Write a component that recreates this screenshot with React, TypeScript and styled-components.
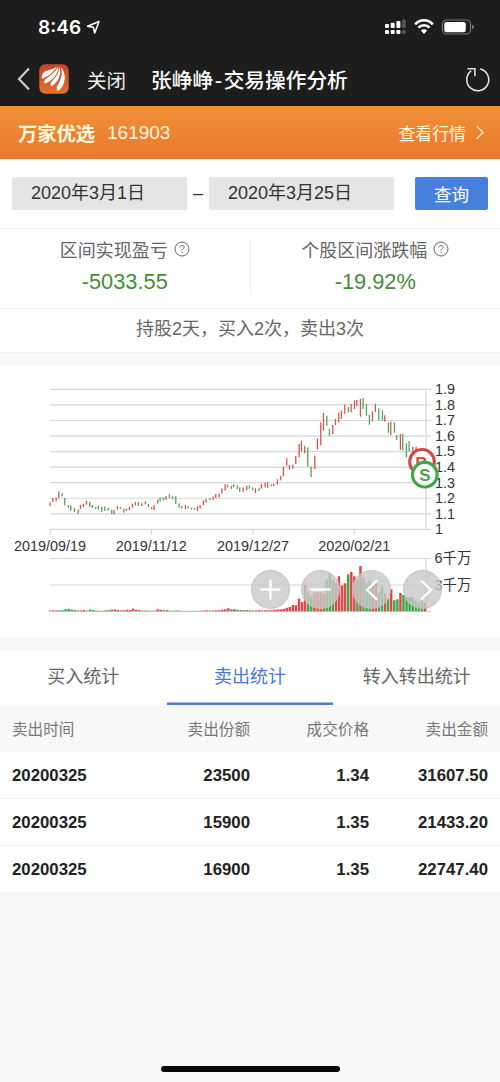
import React from 'react';
import styled, { createGlobalStyle } from 'styled-components';

const Global = createGlobalStyle`
  * { box-sizing: border-box; }
  body { margin: 0; background: #f8f8f8; }
  button { font: inherit; border: 0; padding: 0; margin: 0; }
`;

const Page = styled.div`
  width: 500px;
  height: 1082px;
  display: flex;
  flex-direction: column;
  background: #f8f8f8;
  font-family: "Liberation Sans", "Noto Sans CJK SC", sans-serif;
  color: #666;
  overflow: hidden;
  white-space: nowrap;
`;

const StatusBar = styled.div`
  height: 54px;
  flex: none;
  background: #1d1d1d;
  color: #fff;
  display: flex;
  justify-content: space-between;
  align-items: center;
  padding: 0 26px 0 38px;
`;

const Clock = styled.div`
  display: flex;
  align-items: center;
  gap: 5px;
  font: 600 19px Inter, sans-serif;
`;

const NavBar = styled.header`
  height: 52px;
  flex: none;
  display: flex;
  align-items: center;
  background: #1d1d1d;
  color: #fff;
  padding: 0 10px 1px 17px;
  border-bottom: 1px solid #101820;
`;

const Logo = styled.svg`
  margin-left: 8px;
`;

const CloseText = styled.span`
  font-size: 19.5px;
  margin-left: 18px;
  width: 64px;
  color: #eee;
`;

const Title = styled.h1`
  margin: 0;
  flex: 1;
  font: 500 20.7px "Noto Sans CJK SC", sans-serif;
  span { padding: 0 1.6px; }
`;

const FundBar = styled.section`
  height: 53px;
  flex: none;
  display: flex;
  align-items: center;
  padding: 0 15px 0 18px;
  background: linear-gradient(#ee9136, #ec782e);
  color: #fff8e0;
`;

const FundName = styled.strong`
  font-size: 19.3px;
  font-weight: 700;
  width: 89px;
`;

const FundCode = styled.span`
  font-size: 19px;
  flex: 1;
`;

const QuoteLink = styled.span`
  display: flex;
  align-items: center;
  gap: 9px;
  font-size: 16.9px;
`;

const FilterRow = styled.section`
  height: 70px;
  flex: none;
  display: flex;
  align-items: center;
  padding: 0 12px;
  background: #fff;
  color: #333;
  border-bottom: 1px solid #f2f2f2;
`;

const DateBox = styled.div<{ $w: number }>`
  width: ${p => p.$w}px;
  height: 33px;
  line-height: 33px;
  border-radius: 2px;
  background: #e5e5e5;
  padding-left: 19px;
  font-size: 18px;
`;

const Dash = styled.span`
  width: 22px;
  text-align: center;
  font-size: 18px;
`;

const QueryButton = styled.button`
  margin-left: auto;
  width: 73px;
  height: 33px;
  border-radius: 2px;
  background: #477fdd;
  color: #fff;
  font-size: 17.6px;
`;

const Stats = styled.section`
  height: 80px;
  flex: none;
  display: flex;
  background: #fff;
  border-bottom: 1px solid #f2f2f2;
`;

const Stat = styled.div`
  flex: 1;
  display: flex;
  flex-direction: column;
  align-items: center;
  padding-top: 7px;
`;

const StatDivider = styled.div`
  width: 1px;
  margin: 11px 0 13px;
  background: #f2f2f2;
`;

const StatLabel = styled.div`
  display: flex;
  align-items: center;
  gap: 6px;
  height: 26px;
  font-size: 18px;
`;

const StatValue = styled.div`
  font-size: 21.8px;
  line-height: 40px;
  color: #438e38;
`;

const Summary = styled.section`
  height: 44px;
  flex: none;
  line-height: 41px;
  text-align: center;
  font-size: 18px;
  background: #fff;
  border-bottom: 1px solid #f0f0f0;
`;

const ChartPanel = styled.section`
  position: relative;
  height: 272px;
  flex: none;
  margin: 12px 0 14px;
  background: #fff;
`;

const Chart = styled.svg`
  display: block;
  font-family: "Liberation Sans", "Noto Sans CJK SC", sans-serif;
  font-size: 14.4px;
`;

const ChartControls = styled.div`
  position: absolute;
  left: 250.5px;
  top: 204.5px;
  display: flex;
  gap: 11.8px;
`;

const ControlButton = styled.button`
  width: 39px;
  height: 39px;
  border-radius: 50%;
  background: rgba(200, 200, 200, 0.8);
  border: 1px solid rgba(190, 190, 190, 0.6);
  svg { display: block; }
`;

const Tabs = styled.nav`
  height: 54px;
  flex: none;
  display: flex;
  background: #fff;
`;

const Tab = styled.div<{ $active?: boolean }>`
  flex: 1;
  text-align: center;
  font-size: 18px;
  line-height: 53px;
  color: ${p => (p.$active ? '#4878d0' : '#666')};
  box-shadow: ${p => (p.$active ? 'inset 0 -2.5px #4c78c8' : 'none')};
`;

const Row = styled.div<{ $head?: boolean }>`
  height: ${p => (p.$head ? 47 : 47)}px;
  flex: none;
  display: grid;
  grid-template-columns: 119px 119px 119px 119px;
  align-items: center;
  padding: ${p => (p.$head ? '0 12px 1px' : '1px 12px 0')};
  text-align: right;
  background: ${p => (p.$head ? '#f8f8f8' : '#fff')};
  border-bottom: 1px solid ${p => (p.$head ? '#f8f8f8' : '#f3f3f3')};
  color: ${p => (p.$head ? '#777' : '#222')};
  font-weight: ${p => (p.$head ? 400 : 700)};
  font-size: ${p => (p.$head ? 15.6 : 16.8)}px;
  span:first-child { text-align: left; }
`;

const Footer = styled.footer`
  flex: 1;
  display: flex;
  align-items: flex-end;
  justify-content: center;
  padding-bottom: 10px;
`;

const HomeIndicator = styled.div`
  width: 179px;
  height: 6px;
  border-radius: 3px;
  background: #050505;
`;

const UP = '#d9534f';
const DOWN = '#4fa650';

// Daily ranges as "x,high,low,direction" in thirds of a pixel, measured from y = 370 of the page.
const CANDLES = `150,397,408,r 158,384,396,r 168,383,394,r 176,364,385,r 186,369,379,g 194,384,406,g 205,405,413,g
212,406,423,g 223,414,426,g 234,418,431,r 241,405,417,r 250,401,411,r 259,392,404,r 269,396,411,g 277,405,414,g
287,411,417,g 295,406,419,g 305,410,426,g 314,410,423,g 324,413,422,g 335,419,432,g 342,420,433,r 352,408,419,r
361,411,417,g 371,416,428,g 379,416,423,r 388,411,420,r 397,401,413,r 406,396,406,r 415,396,408,g 425,400,408,r
436,394,403,r 445,402,411,g 455,411,418,r 462,406,420,r 473,389,401,r 480,382,395,g 490,382,391,g 498,378,390,r
508,372,385,g 517,379,388,g 527,379,402,g 537,400,413,g 545,408,415,g 556,405,417,r 564,409,415,r 574,413,419,g
583,414,419,g 592,409,423,r 600,404,416,r 610,391,405,r 618,387,398,r 629,384,391,g 639,379,390,r 647,372,384,r
657,371,382,r 665,355,370,r 675,342,362,r 683,344,352,r 694,347,357,g 701,343,352,r 712,346,358,g 719,352,366,g
729,352,366,r 740,347,361,r 748,346,356,g 758,352,361,g 766,355,369,r 777,355,363,g 784,341,356,r 795,338,352,r
803,337,353,r 814,343,349,g 821,341,348,r 832,328,344,r 842,318,331,r 850,290,319,r 860,265,287,r 868,285,299,r
878,284,296,r 887,258,282,r 897,222,262,r 904,212,244,r 914,228,250,r 923,232,290,g 933,290,321,g 944,257,297,r
952,205,239,r 962,157,226,r 970,129,182,r 980,137,167,g 988,176,197,g 998,165,192,r 1006,147,165,r 1016,128,158,r
1024,122,146,r 1034,104,131,r 1045,111,127,g 1053,102,127,r 1063,91,117,r 1070,90,109,r 1081,86,140,r 1089,84,117,g
1099,102,137,g 1108,135,164,g 1117,125,154,r 1126,102,126,r 1136,115,151,g 1147,121,152,g 1154,136,155,r
1165,157,188,g 1172,155,196,r 1183,157,188,g 1190,195,210,g 1201,192,240,r 1208,192,242,g 1219,220,262,g
1227,213,245,g 1238,230,250,r 1248,230,250,r`
  .split(/\s+/)
  .map(s => s.split(','));

// Volume heights in pixels, one per trading day, with direction.
const VOLUMES = `.8r .9r .8r 1g 1g 2.1g 2.5g 1.7g 1.3g .8g .9r 1.2r .7r 1.8g 1.3g .7g .5g .5g .9r 1.1g 1.8g 1.9r 1.4r 1g 1r
1.6r 1.3r 2.7r 1.5r 1.3g .7r .7r .7g .5g .6r 1.9r 1.6r 1.1g 1.1r .7g .5g .8g .6g .4g .3r .3r .3g .3g .4g .5r .7r .9r .7g
.7r 1r 1r 1.5r 2r 3r 2g 2r 1.5g 1.2g 1r 1.2r 1g .8g .8r 1.2r .8g 1r 1r 1.1r 1.7r 1.8r 2r 2.5r 3.5r 4.3r 6.3r 6r 12.7r
9.3r 27r 20g 16g 19r 19r 19r 18r 32g 38g 31g 28r 35r 26r 28r 37g 39.3r 35r 32g 45.3r 34g 28g 31g 28r 28r 19g 25g 18r
13g 22r 11g 12g 18.3r 16.3g 14.3g 14.3g 14.3g 11g 9.3g 11g 8.3r`
  .split(/\s+/);

const Y_LABELS = ['1.9', '1.8', '1.7', '1.6', '1.5', '1.4', '1.3', '1.2', '1.1', '1'];
const DATES: [string, number][] = [
  ['2019/09/19', 50],
  ['2019/11/12', 151.3],
  ['2019/12/27', 253],
  ['2020/02/21', 354.3],
];

const PriceChart = () => (
  <Chart width="500" height="272" viewBox="0 365 500 272">
    <g stroke="#d6d6d6" strokeWidth="1.2" fill="none">
      {Y_LABELS.map((l, i) => (
        <path key={l} d={`M50 ${389.4 + i * 15.55}H431`} />
      ))}
      <path d="M426 389V529.5M426 558.5V611.5M50 558.5H431M50 585H431M50 611.3H431" />
      {DATES.map(([d, x]) => (
        <path key={d} d={`M${x} 529V535`} />
      ))}
    </g>
    {CANDLES.map(([x, a, b, c]) => (
      <rect
        key={x}
        x={+x / 3 - 0.55}
        y={370 + +a / 3}
        width="1.3"
        height={(+b - +a) / 3}
        fill={c === 'r' ? UP : DOWN}
      />
    ))}
    {VOLUMES.map((v, i) => {
      const h = parseFloat(v);
      const x = 425 - (VOLUMES.length - 1 - i) * 3.072;
      return (
        <rect
          key={i}
          x={x - 1.25}
          y={611.3 - h}
          width="2.5"
          height={h}
          fill={v.endsWith('r') ? '#e0484a' : '#43a648'}
        />
      );
    })}
    <g fill="#333">
      {Y_LABELS.map((l, i) => (
        <text key={l} x="435" y={394.2 + i * 15.55}>{l}</text>
      ))}
      {DATES.map(([d, x]) => (
        <text key={d} x={x} y="550.8" textAnchor="middle">{d}</text>
      ))}
      <text x="434.5" y="563.3">6千万</text>
      <text x="434.5" y="589.6">3千万</text>
    </g>
    <g fontWeight="700" fontSize="17" textAnchor="middle">
      <circle cx="422" cy="461.8" r="12.3" fill="#fff" stroke="#dd4446" strokeWidth="3.2" />
      <text x="421.5" y="468.5" fill="#dd4446">B</text>
      <circle cx="424.8" cy="474.7" r="12.3" fill="#fff" stroke="#46a548" strokeWidth="3.2" />
      <text x="424.8" y="480.7" fill="#46a548">S</text>
    </g>
  </Chart>
);

const CONTROLS = [
  'M9.5 19.5H29.5M19.5 9.5V29.5',
  'M9.5 19.5H29.5',
  'M25 10.5L15 20L25 29.5',
  'M18 10.5L28 20L18 29.5',
];

const HelpIcon = () => (
  <svg width="16" height="16" viewBox="0 0 16 16" fill="none" stroke="#666" strokeWidth="1">
    <circle cx="8" cy="8" r="7" />
    <path d="M6 6.4C6 3.8 10.1 3.8 10.1 6.3C10.1 7.7 8 7.8 8 9.6M8 10.8V12" />
  </svg>
);

const SALES = [
  ['20200325', '23500', '1.34', '31607.50'],
  ['20200325', '15900', '1.35', '21433.20'],
  ['20200325', '16900', '1.35', '22747.40'],
];

export default function App() {
  return (
    <Page>
      <Global />
      <StatusBar>
        <Clock>
          8:46
          <svg width="15" height="15" viewBox="0 0 15 15" fill="none" stroke="#fff" strokeWidth="1.5" strokeLinejoin="round">
            <path d="M13 1.5L1.5 6.2L7.4 7.3L8.7 13Z" />
          </svg>
        </Clock>
        <svg width="90" height="18" viewBox="0 0 90 18" fill="#fff">
          <rect x="1" y="6" width="4" height="4" rx="1" />
          <rect x="6.7" y="4.7" width="4" height="5.3" rx="1" />
          <rect x="12.4" y="3" width="4" height="7" rx="1" />
          <rect x="18" y="1.5" width="3.8" height="8.5" rx="1" fill="#555" />
          <rect x="1" y="12" width="4" height="4" rx="1.2" />
          <rect x="6.7" y="12" width="4" height="4" rx="1.2" />
          <rect x="12.4" y="12" width="4" height="4" rx="1.2" />
          <rect x="18" y="12" width="3.8" height="4" rx="1.2" fill="#555" />
          <g fill="none" stroke="#fff" strokeWidth="2.6">
            <path d="M31.2 6.3C36 .9 44 .9 48.8 6.3" />
            <path d="M34.4 9.7C37.5 6.4 42.5 6.4 45.6 9.7" />
          </g>
          <path d="M36.8 12.6C38.5 10.8 41.5 10.8 43.2 12.6L40 16Z" />
          <rect x="58.5" y="2" width="28" height="14" rx="4" fill="none" stroke="#777" strokeWidth="1.2" />
          <rect x="60.3" y="3.9" width="21.5" height="10.3" rx="2.2" />
          <path d="M88 6.8Q90 7.2 90 9T88 11.3Z" fill="#777" />
        </svg>
      </StatusBar>
      <NavBar>
        <svg width="14" height="24" viewBox="0 0 14 24" fill="none" stroke="#ccc" strokeWidth="2.2">
          <path d="M12 1.5L2 12L12 22.5" />
        </svg>
        <Logo width="30" height="30" viewBox="0 0 30 30">
          <defs>
            <linearGradient id="logo" x2="0" y2="1">
              <stop stopColor="#c9442b" />
              <stop offset="1" stopColor="#e0722f" />
            </linearGradient>
          </defs>
          <rect x=".3" y=".3" width="29.4" height="29.4" rx="6" fill="url(#logo)" />
          <g fill="#fff">
            <path d="M3 14.7C2.5 10.3 4.5 7.7 8.5 6.6C12 5.6 15 4.5 17.8 2.8C15.2 7.6 9.6 12.7 3 14.7Z" />
            <path d="M5.6 19.6C4.6 16.8 6 15.4 9.2 13.3C13.6 10.3 17.1 6.7 19.2 2.6C19.8 10.2 12.5 17.8 5.6 19.6Z" />
            <path d="M12.3 22.2C10.8 19.6 12.3 17.7 14.8 15.2C18.5 11.5 20.2 7 20.4 2.6C22.9 10.2 19.2 19 12.3 22.2Z" />
            <path d="M19 27.3C16.7 24.6 18.1 22 19.9 19C22.9 13.6 23.5 7.9 21.9 2.9C27.8 9.6 27.2 20.6 19 27.3Z" />
          </g>
        </Logo>
        <CloseText>关闭</CloseText>
        <Title>张峥峥<span>-</span>交易操作分析</Title>
        <svg width="25" height="26" viewBox="0 0 25 26" fill="none" stroke="#e8e8e8" strokeWidth="1.5">
          <path d="M6.2 4.9A11 11 0 1 0 15.2 3" />
          <path d="M2.5 2.8H9.9V10.2" />
        </svg>
      </NavBar>
      <FundBar>
        <FundName>万家优选</FundName>
        <FundCode>161903</FundCode>
        <QuoteLink>
          查看行情
          <svg width="10" height="15" viewBox="0 0 10 15" fill="none" stroke="#fff0d8" strokeWidth="1.3">
            <path d="M1.5 1L8 7.5L1.5 14" />
          </svg>
        </QuoteLink>
      </FundBar>
      <FilterRow>
        <DateBox $w={175}>2020年3月1日</DateBox>
        <Dash>–</Dash>
        <DateBox $w={185}>2020年3月25日</DateBox>
        <QueryButton>查询</QueryButton>
      </FilterRow>
      <Stats>
        <Stat>
          <StatLabel>区间实现盈亏<HelpIcon /></StatLabel>
          <StatValue>-5033.55</StatValue>
        </Stat>
        <StatDivider />
        <Stat>
          <StatLabel>个股区间涨跌幅<HelpIcon /></StatLabel>
          <StatValue>-19.92%</StatValue>
        </Stat>
      </Stats>
      <Summary>持股2天，买入2次，卖出3次</Summary>
      <ChartPanel>
        <PriceChart />
        <ChartControls>
          {CONTROLS.map(d => (
            <ControlButton key={d}>
              <svg width="37" height="37" viewBox="1 1 37 37" fill="none" stroke="#fff" strokeWidth="2.4">
                <path d={d} />
              </svg>
            </ControlButton>
          ))}
        </ChartControls>
      </ChartPanel>
      <Tabs>
        <Tab>买入统计</Tab>
        <Tab $active>卖出统计</Tab>
        <Tab>转入转出统计</Tab>
      </Tabs>
      <Row $head>
        <span>卖出时间</span>
        <span>卖出份额</span>
        <span>成交价格</span>
        <span>卖出金额</span>
      </Row>
      {SALES.map(r => (
        <Row key={r[1]}>
          {r.map(v => (
            <span key={v}>{v}</span>
          ))}
        </Row>
      ))}
      <Footer>
        <HomeIndicator />
      </Footer>
    </Page>
  );
}
